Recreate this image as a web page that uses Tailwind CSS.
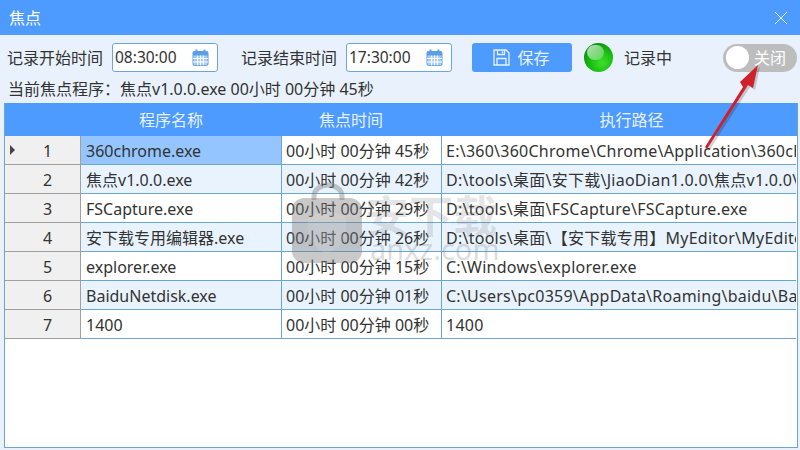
<!DOCTYPE html>
<html lang="zh">
<head>
  <meta charset="UTF-8">
  <title>焦点</title>
  <script src="https://cdn.jsdelivr.net/npm/@tailwindcss/browser@4"></script>
</head>
<body class="w-[800px] h-[450px] overflow-hidden bg-[#e9f2fc] font-['Noto_Sans','Noto_Sans_CJK_SC',sans-serif] text-[16px] text-[#333]">
  <div class="relative flex flex-col w-[800px] h-[450px]">
    <!-- title bar -->
    <div class="flex items-center justify-between h-[35px] pl-[9px] pr-[12px] bg-[#4d9bfe] text-white">
      <span>焦点</span>
      <svg width="14" height="14" viewBox="0 0 14 14" fill="none" stroke="#e8f2ff" stroke-width="1"><path d="M1 1 13 13M13 1 1 13"/></svg>
    </div>

    <!-- toolbar -->
    <div class="flex items-center h-[29px] mt-[8px] pl-[7px]">
      <span class="w-[105px]">记录开始时间</span>
      <div class="flex items-center justify-between w-[106px] h-[29px] pl-[2px] pr-[8px] bg-white border border-[#6aa5e0] rounded-[3px]">
        <span class="text-[15.5px]">08:30:00</span>
        <svg width="17" height="17" viewBox="0 0 17 17"><rect x="1" y="2.5" width="15" height="14" rx="1.5" fill="#a9cdf2" stroke="#5b9fe6"/><rect x="1" y="2.5" width="15" height="4" fill="#5b9fe6"/><rect x="3.5" y="0.5" width="2" height="4" fill="#5b9fe6"/><rect x="11.5" y="0.5" width="2" height="4" fill="#5b9fe6"/><path d="M1 9.5H16M1 13H16M5.7 6.5V16.5M8.5 6.5V16.5M11.3 6.5V16.5" stroke="#fff" stroke-width="1"/></svg>
      </div>
      <span class="w-[105px] ml-[23px]">记录结束时间</span>
      <div class="flex items-center justify-between w-[106px] h-[29px] pl-[2px] pr-[8px] bg-white border border-[#6aa5e0] rounded-[3px]">
        <span class="text-[15.5px]">17:30:00</span>
        <svg width="17" height="17" viewBox="0 0 17 17"><rect x="1" y="2.5" width="15" height="14" rx="1.5" fill="#a9cdf2" stroke="#5b9fe6"/><rect x="1" y="2.5" width="15" height="4" fill="#5b9fe6"/><rect x="3.5" y="0.5" width="2" height="4" fill="#5b9fe6"/><rect x="11.5" y="0.5" width="2" height="4" fill="#5b9fe6"/><path d="M1 9.5H16M1 13H16M5.7 6.5V16.5M8.5 6.5V16.5M11.3 6.5V16.5" stroke="#fff" stroke-width="1"/></svg>
      </div>
      <button class="flex items-center justify-center gap-[7px] w-[100px] h-[29px] ml-[20px] pr-[1px] bg-[#4d9bfe] rounded-[3px] text-[#e8f2ff]">
        <svg width="17" height="17" viewBox="0 0 17 17" fill="none" stroke="#e8f2ff" stroke-width="1.3"><path d="M1 1H13L16 4V16H1Z"/><path d="M4.5 1V5.5H11.5V1M9.5 2.2V4.3"/><path d="M4 16V9.5H13V16"/></svg>
        <span>保存</span>
      </button>
      <div class="relative w-[29px] h-[29px] ml-[12px] rounded-full overflow-hidden bg-[radial-gradient(circle_at_62%_68%,#3fe02c_0%,#1cc014_40%,#0a9a0a_72%,#056a05_100%)]">
        <div class="absolute left-[3px] top-[2px] w-[17px] h-[15px] rounded-full bg-gradient-to-br from-white/75 to-white/20"></div>
      </div>
      <span class="ml-[11px]">记录中</span>
      <div class="flex items-center w-[74px] h-[28px] ml-[51px] pl-[3px] rounded-full bg-[#bdbdbd] text-white">
        <div class="w-[23px] h-[23px] rounded-full bg-white"></div>
        <span class="ml-[5px]">关闭</span>
      </div>
    </div>

    <!-- current program -->
    <div class="h-[31px] pl-[8px] leading-[35px]">当前焦点程序：焦点v1.0.0.exe 00小时 00分钟 45秒</div>

    <!-- table -->
    <div class="flex-1 ml-[4px] mr-[2px] mb-[2px] bg-white border border-[#6ba6cf] border-t-0 overflow-hidden">
      <div class="grid grid-cols-[56px_220px_140px_1fr] h-[33px] leading-[35px] bg-[#4d9bfe] text-center text-[#e8f2ff]">
        <div></div><div>程序名称</div><div>焦点时间</div><div class="pl-[45px]">执行路径</div>
      </div>
      <div class="grid grid-cols-[76px_200px_160px_355px] grid-rows-[repeat(7,29px)] leading-[30px] [&>div]:border-b [&>div]:border-[#6ba6cf] [&>div]:whitespace-nowrap [&>div]:overflow-hidden [&>div:nth-child(4n)]:tracking-[0.25px]">
        <div class="relative pl-[10px] text-center bg-[#f0f0f0] !border-[#a0a0a0] border-r">
          <span class="absolute left-[5px] top-[9px] w-0 h-0 border-y-[5px] border-y-transparent border-l-[5px] border-l-[#444]"></span>1
        </div>
        <div class="pl-[5px] bg-[#94c5ff]">360chrome.exe</div>
        <div class="pl-[4px] border-l border-[#6ba6cf]">00小时 00分钟 45秒</div>
        <div class="pl-[4px] border-l border-[#6ba6cf]">E:\360\360Chrome\Chrome\Application\360chrome.exe</div>

        <div class="pl-[10px] text-center bg-[#f0f0f0] !border-[#a0a0a0] border-r">2</div>
        <div class="pl-[5px] bg-[#e9f3fe]">焦点v1.0.0.exe</div>
        <div class="pl-[4px] bg-[#e9f3fe] border-l border-[#6ba6cf]">00小时 00分钟 42秒</div>
        <div class="pl-[4px] bg-[#e9f3fe] border-l border-[#6ba6cf]">D:\tools\桌面\安下载\JiaoDian1.0.0\焦点v1.0.0\焦点v1.0.0.exe</div>

        <div class="pl-[10px] text-center bg-[#f0f0f0] !border-[#a0a0a0] border-r">3</div>
        <div class="pl-[5px]">FSCapture.exe</div>
        <div class="pl-[4px] border-l border-[#6ba6cf]">00小时 00分钟 29秒</div>
        <div class="pl-[4px] border-l border-[#6ba6cf]">D:\tools\桌面\FSCapture\FSCapture.exe</div>

        <div class="pl-[10px] text-center bg-[#f0f0f0] !border-[#a0a0a0] border-r">4</div>
        <div class="pl-[5px] bg-[#e9f3fe]">安下载专用编辑器.exe</div>
        <div class="pl-[4px] bg-[#e9f3fe] border-l border-[#6ba6cf]">00小时 00分钟 26秒</div>
        <div class="pl-[4px] bg-[#e9f3fe] border-l border-[#6ba6cf]">D:\tools\桌面\【安下载专用】MyEditor\MyEditor.exe</div>

        <div class="pl-[10px] text-center bg-[#f0f0f0] !border-[#a0a0a0] border-r">5</div>
        <div class="pl-[5px]">explorer.exe</div>
        <div class="pl-[4px] border-l border-[#6ba6cf]">00小时 00分钟 15秒</div>
        <div class="pl-[4px] border-l border-[#6ba6cf]">C:\Windows\explorer.exe</div>

        <div class="pl-[10px] text-center bg-[#f0f0f0] !border-[#a0a0a0] border-r">6</div>
        <div class="pl-[5px] bg-[#e9f3fe]">BaiduNetdisk.exe</div>
        <div class="pl-[4px] bg-[#e9f3fe] border-l border-[#6ba6cf]">00小时 00分钟 01秒</div>
        <div class="pl-[4px] bg-[#e9f3fe] border-l border-[#6ba6cf]">C:\Users\pc0359\AppData\Roaming\baidu\BaiduNetdisk\BaiduNetdisk.exe</div>

        <div class="pl-[10px] text-center bg-[#f0f0f0] !border-[#a0a0a0] border-r">7</div>
        <div class="pl-[5px]">1400</div>
        <div class="pl-[4px] border-l border-[#6ba6cf]">00小时 00分钟 00秒</div>
        <div class="pl-[4px] border-l border-[#6ba6cf]">1400</div>
      </div>
    </div>

    <!-- watermark over the table -->
    <svg class="absolute left-[290px] top-[180px] pointer-events-none" width="75" height="86" viewBox="0 0 75 86">
      <path d="M24 20V16a14 11 0 0 1 28 0v4" fill="none" stroke="#777" stroke-opacity=".4" stroke-width="5"/>
      <rect x="2" y="18" width="70" height="65" rx="12" fill="#777" fill-opacity=".4"/>
      <path d="M37 30 56 36V52Q54 66 37 74 20 66 18 52V36Z" fill="#fff" fill-opacity=".1"/>
    </svg>
    <div class="absolute left-[365px] top-[194px] text-[44px] leading-[44px] font-bold text-[#777]/20 pointer-events-none">安下载</div>
    <div class="absolute left-[370px] top-[232px] text-[29px] leading-[34px] text-[#777]/25 pointer-events-none">anxz.com</div>

    <!-- red annotation arrow -->
    <svg class="absolute left-[695px] top-[60px] pointer-events-none" width="70" height="95" viewBox="0 0 70 95">
      <path d="M12 89 50 29 47 24 65 7 60 30 55 27 14 91Z" fill="#000" fill-opacity=".18"/>
      <path d="M10 87 48 27 45 22 63 5 58 28 53 25 12 89Z" fill="#d0202a"/>
    </svg>
  </div>
</body>
</html>
